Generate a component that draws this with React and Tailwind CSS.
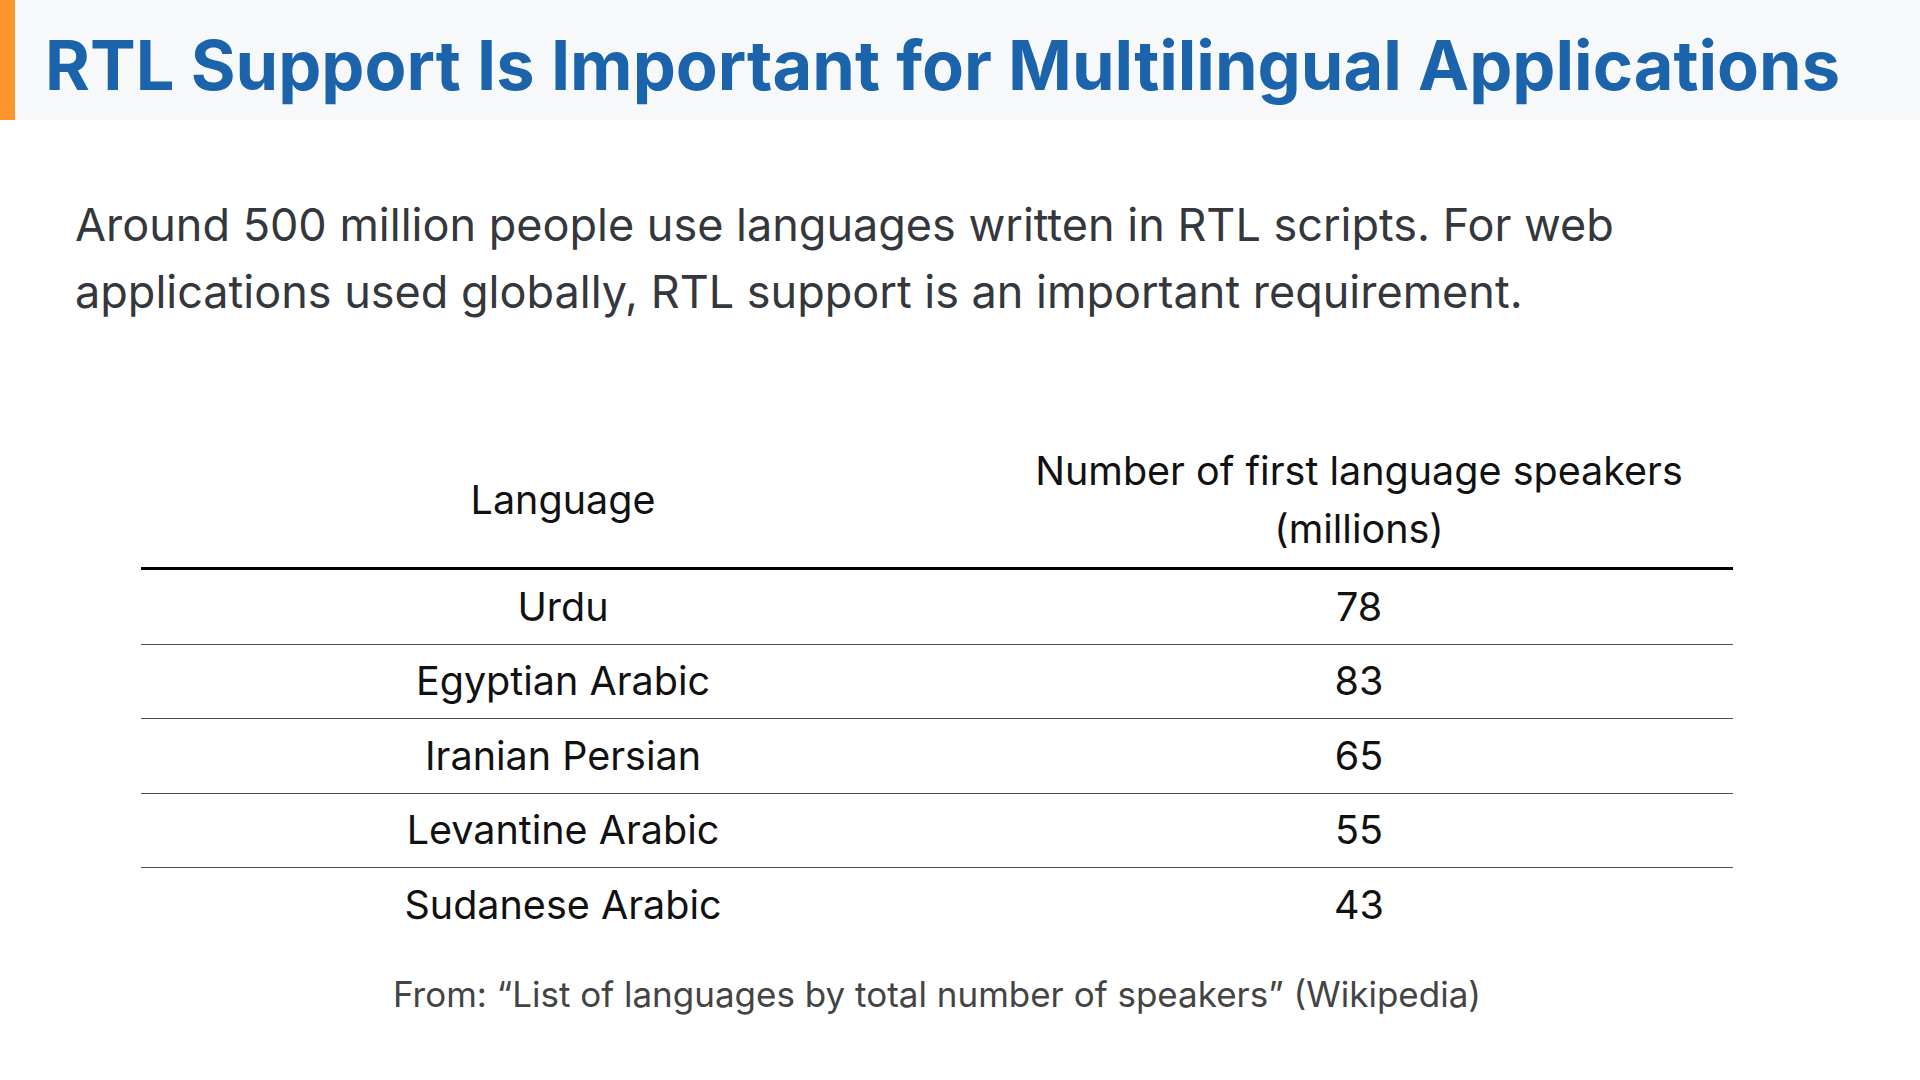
const rows = [
  ['Urdu', '78'],
  ['Egyptian Arabic', '83'],
  ['Iranian Persian', '65'],
  ['Levantine Arabic', '55'],
  ['Sudanese Arabic', '43'],
]

export default function App() {
  return (
    <div className="min-h-screen w-[1920px] bg-white font-['Inter',sans-serif]">
      {/* title band */}
      <header className="flex h-[120px] bg-[#f6f8fa]">
        <div className="w-[15px] bg-[#fd962d]" />
        <h1 className="pl-[30px] pt-[32px] text-[68.5px] font-bold leading-none text-[#1b63ab]">
          RTL Support Is Important for Multilingual Applications
        </h1>
      </header>

      <p className="mt-[71px] w-[1680px] pl-[75px] text-[45px] leading-[67px] text-[#34373c]">
        Around 500 million people use languages written in RTL scripts. For web
        applications used globally, RTL support is an important requirement.
      </p>

      {/* speakers table */}
      <div className="ml-[141px] mt-[109px] w-[1592px] text-[39.5px] text-[#111]">
        <div className="grid grid-cols-[844px_748px] border-b-[3px] border-black pb-[9px] pt-[8px] leading-[58px]">
          <div className="flex items-center justify-center text-center">Language</div>
          <div className="text-center">
            Number of first language speakers
            <br />
            (millions)
          </div>
        </div>
        {rows.map(([lang, count], i) => (
          <div
            key={lang}
            className={
              i < rows.length - 1
                ? 'grid h-[74.5px] grid-cols-[844px_748px] items-center border-b-[1.5px] border-[#4d4d4d]'
                : 'grid h-[74px] grid-cols-[844px_748px] items-center'
            }
          >
            <div className="text-center leading-[58px]">{lang}</div>
            <div className="text-center leading-[58px]">{count}</div>
          </div>
        ))}
        <p className="mt-[26px] text-center text-[35px] leading-[52px] text-[#444]">
          From: “List of languages by total number of speakers” (Wikipedia)
        </p>
      </div>
    </div>
  )
}
